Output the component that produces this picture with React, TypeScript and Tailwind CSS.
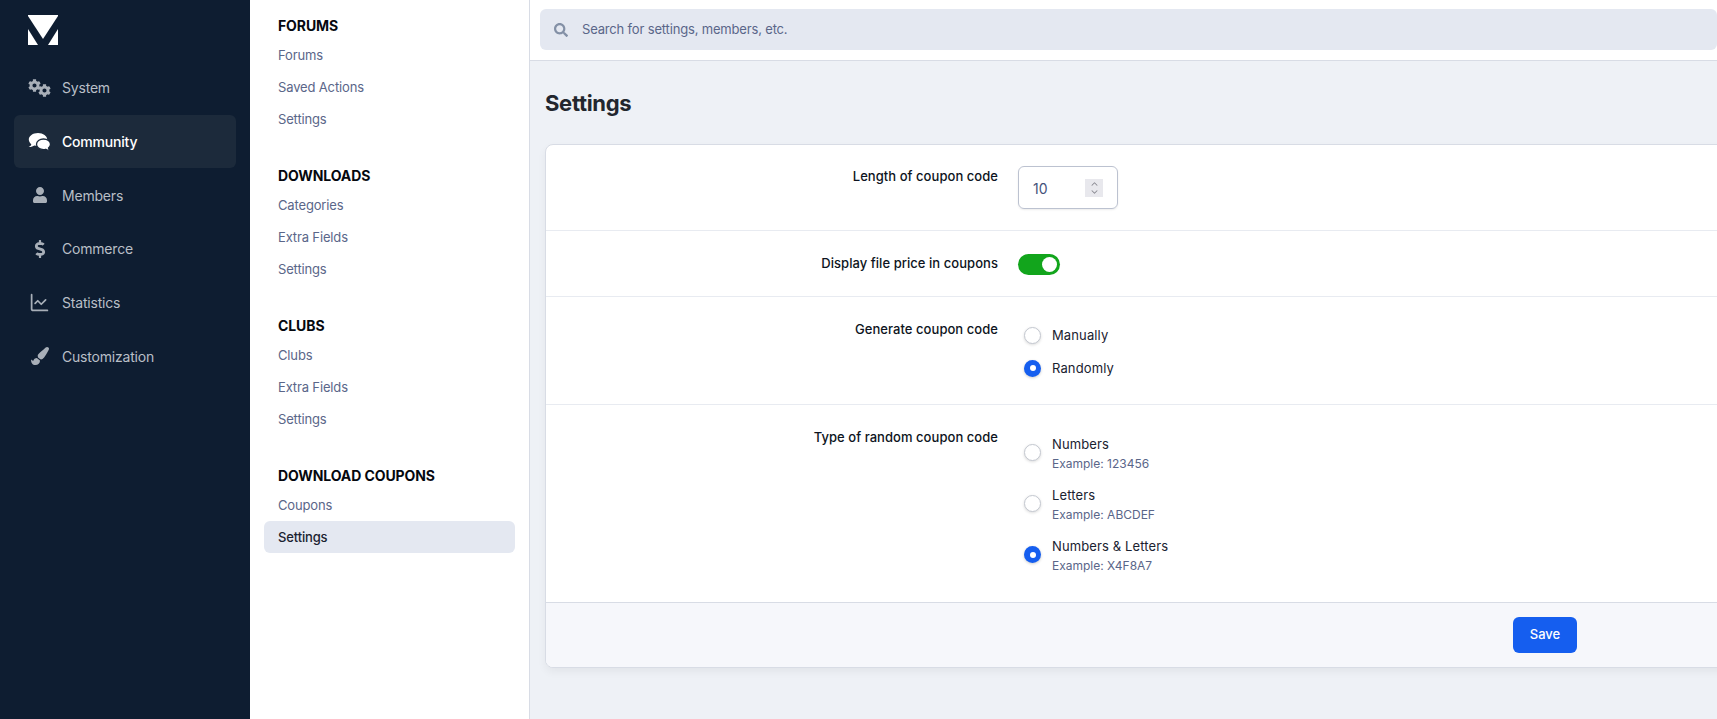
import React from 'react';
import { FaCog, FaUser, FaDollarSign, FaPaintBrush, FaSearch } from 'react-icons/fa';
import { ChevronUp, ChevronDown, ChartLine } from 'lucide-react';

const CogsIcon = () => (
  <span className="relative block h-[18px] w-[23px]">
    <FaCog size={13} className="absolute left-0 top-0" />
    <FaCog size={13} className="absolute bottom-0 right-0" />
  </span>
);

const CommentsIcon = () => (
  <svg width="23" height="18" viewBox="0 0 23 18" fill="#fff">
    <path d="M10 0C4.800 0 .8 2.900.8 6.600c0 1.800 1 3.400 2.500 4.600C3 12.500 2 13.500.6 14c2.200.2 4.300-.5 5.800-1.500 1.100.3 2.300.5 3.600.5 5.200 0 9.200-2.900 9.200-6.400S15.200 0 10 0Z" />
    <path
      d="M15.500 6c-3.900 0-7 2.400-7 5.300s3.100 5.300 7 5.300c.8 0 1.500-.1 2.200-.3 1.100.7 2.900 1.200 4.800 1-1-.5-1.800-1.300-2-2.300 1.200-1 2-2.300 2-3.700 0-2.900-3.100-5.300-7-5.300Z"
      stroke="#1c2a3b"
      strokeWidth="1.300"
    />
  </svg>
);

const primaryNav = [
  { label: 'System', icon: <CogsIcon /> },
  { label: 'Community', icon: <CommentsIcon />, active: true },
  { label: 'Members', icon: <FaUser size={16} /> },
  { label: 'Commerce', icon: <FaDollarSign size={18} /> },
  { label: 'Statistics', icon: <ChartLine size={21} strokeWidth={2} /> },
  { label: 'Customization', icon: <FaPaintBrush size={18} /> },
];

const sections = [
  { title: 'FORUMS', items: ['Forums', 'Saved Actions', 'Settings'] },
  { title: 'DOWNLOADS', items: ['Categories', 'Extra Fields', 'Settings'] },
  { title: 'CLUBS', items: ['Clubs', 'Extra Fields', 'Settings'] },
  { title: 'DOWNLOAD COUPONS', items: ['Coupons', 'Settings'] },
];

const Radio = ({ checked }: { checked?: boolean }) =>
  checked ? (
    <span className="flex h-[17px] w-[17px] shrink-0 items-center justify-center rounded-full bg-[#155eef] shadow-[0_1px_3px_rgba(0,0,0,0.2)]">
      <span className="h-[6px] w-[6px] rounded-full bg-white" />
    </span>
  ) : (
    <span className="h-[17px] w-[17px] shrink-0 rounded-full border border-[#c4c8d0] bg-white shadow-[0_1px_3px_rgba(0,0,0,0.15)]" />
  );

const RadioRow = ({ label, example, checked }: { label: string; example?: string; checked?: boolean }) => (
  <div className="flex items-center">
    <span className={`ml-[6px] mr-[11px] flex ${example ? 'mb-[3px]' : ''}`}>
      <Radio checked={checked} />
    </span>
    <div>
      <div className="text-[13px] leading-[20px] tracking-[0.12px] text-[#1a2230]">{label}</div>
      {example && <div className="text-[12px] leading-[20px] text-[#5a6689]">{example}</div>}
    </div>
  </div>
);

const FormRow = ({ label, children, className }: { label: string; children: React.ReactNode; className: string }) => (
  <div className={`flex border-b border-[#e8ebf1] ${className}`}>
    <div className="w-[452px] text-right text-[13px] font-medium leading-[20px] tracking-[0.05px] text-[#0d1421]">{label}</div>
    <div className="ml-[20px]">{children}</div>
  </div>
);

export default function App() {
  return (
    <div className="flex h-[719px] w-[1717px] overflow-hidden bg-[#eef1f6] font-['Inter',sans-serif]">
      {/* Primary nav */}
      <aside className="w-[250px] shrink-0 bg-[#0e1d31] px-[14px]">
        <div className="flex h-[60px] items-start pl-[14px] pt-[15px]">
          <svg width="30" height="30" viewBox="0 0 30 30" fill="#fff">
            <path d="M0 0H30V1L15 24L0 1Z" />
            <path d="M0 14L10 30H0Z" />
            <path d="M30 14L20 30H30Z" />
          </svg>
        </div>
        <nav className="pt-[1px]">
          {primaryNav.map(({ label, icon, active }) => (
            <div
              key={label}
              className={`flex h-[53.7px] items-center rounded-md ${active ? 'bg-[#1c2a3b] text-white font-medium' : 'text-[#b9bfc7]'}`}
            >
              <span className={`flex w-[48px] justify-center pl-[3px] ${active ? 'text-white' : 'text-[#a8afb8]'}`}>
                {icon}
              </span>
              <span className="text-[14px] tracking-[-0.2px]">{label}</span>
            </div>
          ))}
        </nav>
      </aside>

      {/* Secondary nav */}
      <aside className="w-[280px] shrink-0 border-r border-[#d8dce5] bg-white px-[14px] pt-[16px]">
        {sections.map((s) => (
          <div key={s.title} className="mb-[30px]">
            <h3 className="px-[14px] text-[14px] font-bold leading-[20px] tracking-[-0.1px] text-[#05080f]">{s.title}</h3>
            <ul className="mt-[4px]">
              {s.items.map((item, i) => {
                const active = s.title === 'DOWNLOAD COUPONS' && i === 1;
                return (
                  <li
                    key={item}
                    className={`flex h-[32px] items-center rounded-md px-[14px] text-[13px] tracking-[-0.15px] ${active ? '-mt-[1px] mb-[1px] bg-[#e4e8f1] pt-[2px] font-medium text-[#1a2230]' : 'text-[#5a6689]'}`}
                  >
                    {item}
                  </li>
                );
              })}
            </ul>
          </div>
        ))}
      </aside>

      {/* Content */}
      <div className="min-w-0 flex-1">
        <header className="flex h-[61px] items-start border-b border-[#d8dce5] bg-white pl-[10px] pt-[9px]">
          <div className="flex h-[41px] w-[1400px] items-center rounded-md bg-[#e4e8f1] pl-[14px]">
            <FaSearch size={14} className="text-[#8390a6]" />
            <span className="ml-[14px] text-[13px] tracking-[-0.17px] text-[#5a6689]">Search for settings, members, etc.</span>
          </div>
        </header>
        <main className="pl-[15px]">
          <h1 className="flex h-[83px] items-center pt-[1px] text-[22px] font-bold tracking-[-0.3px] text-[#22262e]">Settings</h1>
          <div className="w-[2000px] overflow-hidden rounded-lg border border-[#d8dce5] bg-white shadow-[0_4px_8px_rgba(0,0,0,0.05)]">
            <FormRow label="Length of coupon code" className="h-[86px] pt-[21px]">
              <div className="flex h-[43px] w-[100px] items-center justify-between rounded-md border border-[#bcc2d0] pl-[14px] pr-[14px] pt-[1px] text-[14px] text-[#46527a] shadow-[0_1px_2px_rgba(0,0,0,0.08)]">
                10
                <span className="flex h-[18px] w-[18px] flex-col items-center justify-center bg-[#e8e8ed] text-[#8a8a92]">
                  <ChevronUp size={11} strokeWidth={2.5} className="-mb-[1px]" />
                  <ChevronDown size={11} strokeWidth={2.5} className="-mt-[1px]" />
                </span>
              </div>
            </FormRow>
            <FormRow label="Display file price in coupons" className="h-[66px] pt-[22px]">
              <div className="mt-[1px] flex h-[21px] w-[42px] items-center justify-end rounded-full bg-[#12a51c] pr-[3px]">
                <span className="h-[15px] w-[15px] rounded-full bg-white" />
              </div>
            </FormRow>
            <FormRow label="Generate coupon code" className="h-[108px] pt-[22px]">
              <div className="flex flex-col gap-[13px] pt-[6px]">
                <RadioRow label="Manually" />
                <RadioRow label="Randomly" checked />
              </div>
            </FormRow>
            <div className="flex h-[197px] pt-[22px]">
              <div className="w-[452px] text-right text-[13px] font-medium leading-[20px] tracking-[0.05px] text-[#0d1421]">Type of random coupon code</div>
              <div className="ml-[20px] flex flex-col gap-[11px] pt-[7px]">
                <RadioRow label="Numbers" example="Example: 123456" />
                <RadioRow label="Letters" example="Example: ABCDEF" />
                <RadioRow label="Numbers & Letters" example="Example: X4F8A7" checked />
              </div>
            </div>
            <div className="flex h-[65px] items-center justify-center border-t border-[#d8dce5] bg-[#f6f7fb]">
              <button className="h-[36px] w-[64px] rounded-md bg-[#155eef] text-[13px] font-medium text-white">Save</button>
            </div>
          </div>
        </main>
      </div>
    </div>
  );
}
